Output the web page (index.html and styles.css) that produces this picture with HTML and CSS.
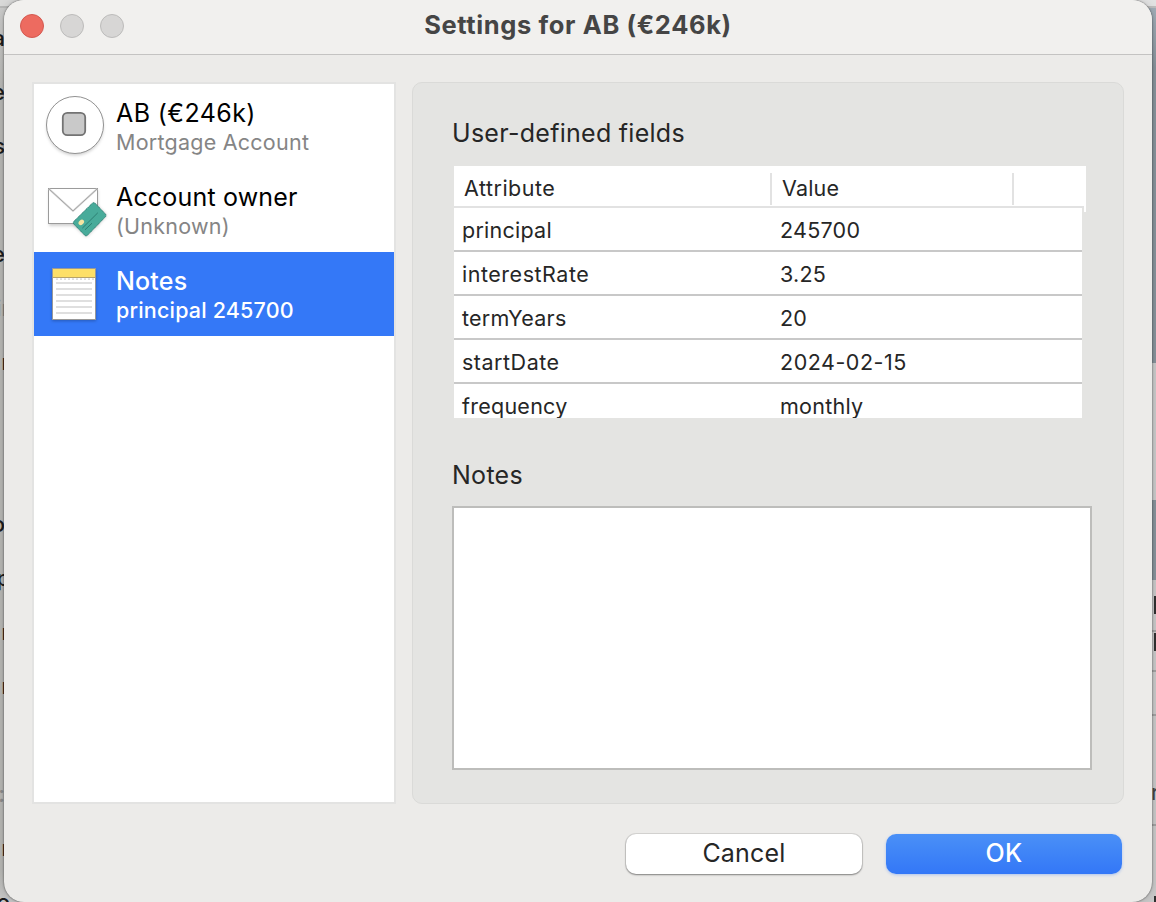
FILE: index.html
```html
<!DOCTYPE html>
<html lang="en">
<head>
<meta charset="utf-8">
<title>Settings for AB (€246k)</title>
<link rel="stylesheet" href="styles.css">
</head>
<body>
<div class="desktop">
  <div class="backdrop-left" aria-hidden="true">
    <span class="scrap" style="top:23px">a</span>
    <span class="scrap" style="top:77px">e</span>
    <span class="scrap" style="top:131px">s</span>
    <span class="scrap" style="top:239px">e</span>
    <span class="scrap dim stem" style="top:293px">ir</span>
    <span class="scrap stem" style="top:347px">r</span>
    <span class="scrap" style="top:509px">o</span>
    <span class="scrap stem" style="top:563px">p</span>
    <span class="scrap stem" style="top:617px">r</span>
    <span class="scrap stem" style="top:671px">r</span>
    <span class="scrap dim" style="top:779px">:</span>
    <span class="scrap stem" style="top:833px">r</span>
    <span class="scrap wide" style="top:887px">o</span>
  </div>
  <div class="backdrop-right" aria-hidden="true">
    <i class="slab top"></i><i class="slab steel"></i><i class="slab pale"></i><i class="slab steel short"></i>
    <i class="slab cell a"></i><i class="slab cell b"></i><i class="slab cell c"></i><i class="slab cell d"></i>
    <i class="mark" style="top:596px"></i><i class="mark" style="top:633px"></i><i class="mark" style="top:896px"></i>
    <span class="letter">r</span>
  </div>
  <main class="window">
    <header class="titlebar">
      <div class="lights"><i class="light close"></i><i class="light"></i><i class="light"></i></div>
      <h1 class="title">Settings for AB (€246k)</h1>
    </header>
    <div class="content">
      <nav class="sidebar">
        <div class="item">
          <svg class="icon" viewBox="0 0 64 84">
            <circle class="soft" cx="33" cy="43" r="28.5"/>
            <circle cx="33" cy="41" r="28.5" fill="#fff" stroke="#929292"/>
            <rect x="20.8" y="28.8" width="22.4" height="22.4" rx="4.5" fill="#c9c9c9" stroke="#737373" stroke-width="1.8"/>
          </svg>
          <div class="labels"><span class="name loose">AB (€246k)</span><span class="sub">Mortgage Account</span></div>
        </div>
        <div class="item">
          <svg class="icon" viewBox="0 0 64 84">
            <rect class="soft" x="7" y="22" width="49" height="36"/>
            <rect x="6.5" y="20.5" width="49" height="35" fill="#fff" stroke="#9b9b9b"/>
            <path d="M7 21 L31 43 L55 21" fill="none" stroke="#d9d9d9" stroke-width="2"/>
            <path d="M7 21 L31 43 L55 21" fill="none" stroke="#969696" stroke-width=".8"/>
            <path class="soft" d="M32.5 56 L51 36 Q52.5 35 54 36 L64 46 Q65 48 64 49 L46 68 Q44 69 43 68 L32 58 Q31 57 32.5 56Z"/>
            <path d="M31.8 53.5 L50.3 35.3 Q51.7 34.2 53 35.2 L63.4 46 Q64.4 47.5 63.4 48.8 L45.4 67.3 Q44 68.4 42.7 67.2 L31.8 56 Q30.8 54.8 31.8 53.5Z" fill="#48ab9a" stroke="#267d70" stroke-dasharray="1.4 .5"/>
            <ellipse cx="39.3" cy="54.4" rx="3.1" ry="2.3" transform="rotate(-44 39.3 54.4)" fill="#f5e4a1"/>
            <path d="M40.3 60.2 L55.8 44.8 M43 61.8 L50 55.2" stroke="#28796d" stroke-width=".9"/>
          </svg>
          <div class="labels"><span class="name">Account owner</span><span class="sub">(Unknown)</span></div>
        </div>
        <div class="item selected">
          <svg class="icon" viewBox="0 0 64 84">
            <rect class="soft dark" x="10" y="18" width="44" height="51"/>
            <rect x="10.5" y="16.5" width="43" height="51" fill="#fff" stroke="#999" />
            <rect x="11" y="17" width="42" height="8" fill="#fddf68"/>
            <path d="M10.5 25.5H53.5" stroke="#b6a36b"/>
            <path d="M14 27.2H53" stroke="#dedede" stroke-width="1.8" stroke-dasharray="2 2"/>
            <path d="M14 31H50M14 37H50M14 43H50M14 49H50M14 55H50M14 61H50" stroke="#dfdfdf" stroke-width="2"/>
          </svg>
          <div class="labels"><span class="name">Notes</span><span class="sub">principal 245700</span></div>
        </div>
      </nav>
      <section class="panel">
        <h2 class="heading">User-defined fields</h2>
        <div class="table">
          <div class="thead"><span class="th">Attribute</span><span class="th second">Value</span></div>
          <div class="tbody">
            <div class="row"><span class="key">principal</span><span class="val">245700</span></div>
            <div class="row"><span class="key wide-text">interestRate</span><span class="val">3.25</span></div>
            <div class="row"><span class="key">termYears</span><span class="val">20</span></div>
            <div class="row"><span class="key wide-text">startDate</span><span class="val wide-text">2024-02-15</span></div>
            <div class="row"><span class="key">frequency</span><span class="val">monthly</span></div>
          </div>
        </div>
        <h2 class="heading h-notes">Notes</h2>
        <div class="notes-box"></div>
      </section>
    </div>
    <footer class="actions">
      <button class="btn"><span>Cancel</span></button>
      <button class="btn primary"><span>OK</span></button>
    </footer>
  </main>
</div>
</body>
</html>
```
FILE: styles.css
```css
* { box-sizing: border-box; }
body { margin: 0; font-family: Inter, "Liberation Sans", sans-serif; color: #262626; }
.desktop { position: relative; width: 1156px; height: 902px; overflow: hidden; padding: 0 4px; background: #c2c2c1; }
.backdrop-left { position: absolute; left: 0; top: 0; width: 40px; height: 902px; overflow: hidden; background: linear-gradient(#d9d9d8 0 6px, #b8b8b7 6px 8px, #cacac9 8px, #b6b6b3 90px, #b6b6b3 870px, #c6c6c6); }
.scrap { position: absolute; right: 35px; font-size: 22px; line-height: 30px; font-weight: 500; color: #1c1c1c; }
.scrap.stem { right: 30px; }
.scrap.dim { color: #8b8b8a; }
.scrap.wide { right: 30px; }
.backdrop-right { position: absolute; right: 0; top: 0; width: 40px; height: 902px; overflow: hidden; display: flex; flex-direction: column; background: #c8c8c8; }
.slab { flex: none; height: 8px; background: #e2e2e2; border-bottom: 2px solid #bdbdbd; }
.slab.steel { height: 355px; background: linear-gradient(#a1adb7, #87929a 60px); border: 0; }
.slab.pale { height: 137px; background: #c9c9c9; border: 0; }
.slab.short { height: 80px; background: #87929a; }
.slab.cell { background: #c8c8c8; border-bottom-color: #a2a2a2; }
.slab.a { height: 52px; }
.slab.b { height: 40px; }
.slab.c { height: 44px; }
.slab.d { height: 110px; }
.mark { position: absolute; right: 0; width: 2px; height: 18px; background: #303030; }
.letter { position: absolute; left: 35px; top: 777px; font-size: 22px; line-height: 30px; color: #444; }
.window { position: relative; width: 1148px; height: 902px; background: #ecebe9; border-radius: 20px; box-shadow: 0 0 2px rgba(0,0,0,.65), 0 0 10px rgba(0,0,0,.15); overflow: hidden; }
.titlebar { height: 55px; background: #f1f0ee; border-bottom: 1px solid #c4c3c2; display: grid; grid-template-columns: 130px 1fr 130px; }
.lights { display: flex; gap: 16px; padding: 14px 0 0 16px; }
.light { width: 24px; height: 24px; border-radius: 50%; background: #d7d6d5; border: 1px solid #bcbbba; }
.light.close { background: #ed6b60; border-color: #d35950; }
.title { margin: 0; padding-top: 9px; text-align: center; font-size: 25.5px; line-height: 32px; font-weight: 700; color: #454545; letter-spacing: .62px; white-space: nowrap; }
.content { display: flex; gap: 16px; padding: 27px 28px 0; }
.sidebar { width: 364px; height: 722px; border: 2px solid #e3e3e2; background: #fff; }
.item { display: flex; height: 84px; padding-left: 8px; color: #000; white-space: nowrap; }
.icon { width: 64px; height: 84px; flex: none; overflow: visible; }
.soft { fill: rgba(0,0,0,.18); filter: blur(1.5px); }
.soft.dark { fill: rgba(0,0,0,.25); }
.labels { display: flex; flex-direction: column; padding: 12px 0 0 10px; }
.name { font-size: 25px; line-height: 34px; letter-spacing: .17px; }
.name.loose { letter-spacing: .4px; }
.sub { font-size: 21.5px; line-height: 24px; color: #858585; letter-spacing: .24px; }
.selected { background: #3478f7; color: #fff; }
.selected .sub { color: #fff; font-weight: 500; letter-spacing: .18px; }
.selected .name { font-weight: 450; }
.panel { width: 712px; height: 722px; padding: 33px 31px 0 39px; border: 1px solid #dadad8; border-radius: 10px; background: #e4e4e2; }
.heading { margin: 0; font-size: 25px; line-height: 34px; font-weight: 400; letter-spacing: .28px; }
.table { margin: 16px 0 0 2px; width: 632px; height: 252px; background: linear-gradient(#fff, #fff) right top / 2px 46px no-repeat; }
.thead { display: flex; height: 42px; background: linear-gradient(#e2e2e2, #e2e2e2) left bottom / 630px 2px no-repeat #fff; padding-top: 7px; font-size: 21.5px; line-height: 31px; letter-spacing: .5px; }
.th { width: 318px; height: 32px; padding-left: 10px; border-right: 2px solid #e2e2e2; }
.th.second { width: 242px; letter-spacing: .2px; }
.tbody { width: 628px; height: 210px; overflow: hidden; background: #fff; }
.row { display: flex; height: 44px; padding: 7px 0 0 8px; font-size: 21.5px; line-height: 30px; border-bottom: 2px solid #c8c8c8; letter-spacing: .25px; }
.key { width: 318px; }
.wide-text { letter-spacing: .52px; }
.h-notes { margin-top: 40px; }
.notes-box { width: 640px; height: 264px; margin-top: 14px; background: #fff; border: 2px solid #bdbdbb; }
.actions { display: flex; justify-content: flex-end; gap: 24px; padding: 30px 30px 0 0; }
.btn { width: 236px; height: 40px; padding: 0 0 2px; border: 0; border-radius: 10px; background: #fff; box-shadow: 0 0 0 1px rgba(0,0,0,.09), 0 1px 2px rgba(0,0,0,.4); font: 400 25px/36px Inter, sans-serif; letter-spacing: .2px; color: #262626; }
.btn.primary { background: linear-gradient(#4a90f7, #3377f7); color: #fff; font-weight: 500; box-shadow: 0 1px 3px rgba(52,120,247,.35); }
```
